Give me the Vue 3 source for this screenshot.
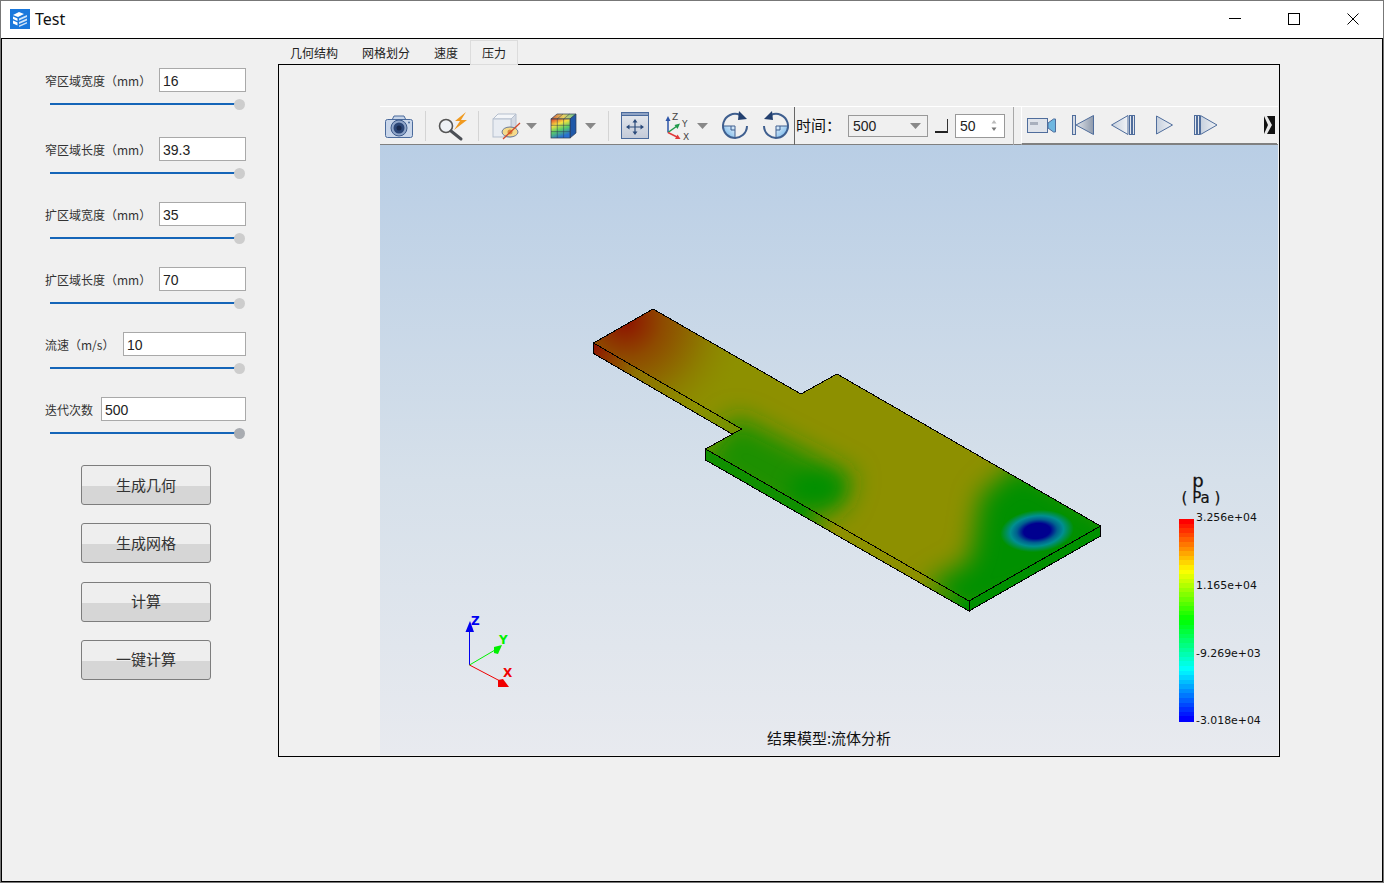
<template>
  <div class="window">
    <header class="titlebar">
      <svg class="logo" viewBox="0 0 20 20">
        <rect width="20" height="20" fill="#1a78dc" />
        <path d="M3 6 L9 3 L14 5 L8 8 Z" fill="#ffffff" />
        <path d="M3 7.5 L7.5 9.5 V12 L3 10 Z" fill="#ffffff" />
        <path d="M3 11.5 L7.5 13.5 V16.5 L3 14.5 Z" fill="#ffffff" />
        <path d="M9 9.5 L17 6 V8 L9 11.5 Z" fill="#cfe4fa" />
        <path d="M9 13 L17 9.5 V11.5 L9 15 Z" fill="#cfe4fa" />
        <path d="M9 16.5 L17 13 V14.5 L9 18 Z" fill="#cfe4fa" />
      </svg>
      <span class="title">Test</span>
      <div class="window-buttons">
        <svg viewBox="0 0 12 12" width="12" height="12"><path d="M0 5.5 H12" stroke="#000" fill="none" /></svg>
        <svg viewBox="0 0 12 12" width="12" height="12"><rect x="0.5" y="0.5" width="11" height="11" stroke="#000" fill="none" /></svg>
        <svg viewBox="0 0 12 12" width="12" height="12"><path d="M0.5 0.5 L11.5 11.5 M11.5 0.5 L0.5 11.5" stroke="#000" fill="none" /></svg>
      </div>
    </header>

    <main class="client">
      <aside class="sidebar">
        <div class="fields">
          <div v-for="field in fields" :key="field.label" class="field">
            <div class="field-row">
              <label class="field-label">{{ field.label }}</label>
              <input class="field-input" :value="field.value" :style="{ width: field.width + 'px' }" readonly />
            </div>
            <div class="slider">
              <div class="slider-thumb" :class="{ active: field.active }"></div>
            </div>
          </div>
        </div>

        <div class="actions">
          <button v-for="action in actions" :key="action" class="action-button">{{ action }}</button>
        </div>
      </aside>

      <section class="tabs-area">
        <nav class="tabs">
          <div v-for="tab in tabs" :key="tab" class="tab" :class="{ current: tab === currentTab }">{{ tab }}</div>
        </nav>

        <div class="pane">
          <div class="viewer">
            <div class="toolbar">
              <div class="tools-left">
                <!-- 相机 -->
                <svg class="icon" viewBox="0 0 30 30">
                  <path d="M8 9 L10 5 H20 L22 9 Z" fill="#c6d4e8" stroke="#4a6a9c" />
                  <rect x="1.5" y="8.5" width="27" height="18" rx="2" fill="#c9d6ea" stroke="#4a6a9c" />
                  <circle cx="15" cy="17" r="8" fill="#8fa5c9" stroke="#3d5a8a" />
                  <circle cx="15" cy="17" r="5.5" fill="#2b4677" />
                  <circle cx="15" cy="17" r="2.5" fill="#17274b" />
                  <circle cx="25" cy="11.5" r="1" fill="#4a6a9c" />
                </svg>
                <div class="sep"></div>
                <!-- 放大镜 -->
                <svg class="icon" viewBox="0 0 30 30">
                  <circle cx="9" cy="15" r="6.5" fill="#eef1f5" stroke="#555" stroke-width="1.6" />
                  <path d="M14 20 L24 28" stroke="#4b4f55" stroke-width="3" stroke-linecap="round" />
                  <path d="M29 1 L18 10 H23 L17 19 L30 9 H24 Z" fill="#f09a20" />
                </svg>
                <div class="sep"></div>
                <div class="tool-group">
                  <svg class="icon" viewBox="0 0 30 30">
                    <path d="M3 8 L8 3 H26 L21 8 Z" fill="#f4f6f9" stroke="#b5bfce" />
                    <path d="M21 8 L26 3 V21 L21 26 Z" fill="#d3d9e3" stroke="#b5bfce" />
                    <rect x="3" y="8" width="18" height="18" fill="#e8ecf2" stroke="#b5bfce" />
                    <ellipse cx="20" cy="21" rx="8" ry="5" fill="#f4d98a" stroke="#6a7a98" />
                    <circle cx="20" cy="21" r="2.5" fill="#d98a3a" />
                    <path d="M13 28 L30 12" stroke="#d2492a" stroke-width="1.3" />
                  </svg>
                  <svg class="drop" viewBox="0 0 11 6"><path d="M0 0 H11 L5.5 6 Z" fill="#888" /></svg>
                </div>
                <div class="tool-group tight">
                  <svg class="icon" viewBox="0 0 30 30">
                    <defs>
                      <linearGradient id="cube-front" x1="0" y1="0" x2="0.4" y2="1">
                        <stop offset="0" stop-color="#e03a2c" />
                        <stop offset="0.35" stop-color="#f7e040" />
                        <stop offset="0.65" stop-color="#58cc68" />
                        <stop offset="1" stop-color="#2a70d0" />
                      </linearGradient>
                      <linearGradient id="cube-top" x1="0" y1="0" x2="1" y2="0">
                        <stop offset="0" stop-color="#d05a38" />
                        <stop offset="0.5" stop-color="#e7d060" />
                        <stop offset="1" stop-color="#5ec49a" />
                      </linearGradient>
                    </defs>
                    <path d="M2 8 L8 3 H27 L21 8 Z" fill="url(#cube-top)" stroke="#2b3a55" stroke-width="0.7" />
                    <path d="M21 8 L27 3 V22 L21 27 Z" fill="#1f58a8" stroke="#2b3a55" stroke-width="0.7" />
                    <rect x="2" y="8" width="19" height="19" fill="url(#cube-front)" stroke="#2b3a55" stroke-width="0.7" />
                    <path d="M8.3 8 V27 M14.6 8 V27 M2 14.3 H21 M2 20.6 H21 M8 8 L14 3 M14.6 8 L20.6 3" stroke="#2b3a55" stroke-width="0.5" fill="none" />
                  </svg>
                  <svg class="drop" viewBox="0 0 11 6"><path d="M0 0 H11 L5.5 6 Z" fill="#888" /></svg>
                </div>
                <div class="sep tight"></div>
                <!-- 适应窗口 -->
                <svg class="icon" viewBox="0 0 30 30">
                  <defs>
                    <linearGradient id="fit-fill" x1="0" y1="0" x2="0" y2="1">
                      <stop offset="0" stop-color="#e6e9ee" />
                      <stop offset="1" stop-color="#c3cad8" />
                    </linearGradient>
                  </defs>
                  <rect x="1.5" y="1.5" width="27" height="26" fill="url(#fit-fill)" stroke="#4a6a9c" />
                  <rect x="1.5" y="1.5" width="27" height="3" fill="#8fa3c4" stroke="#4a6a9c" />
                  <path d="M15 11 V21 M9 16 H21" stroke="#2b4a7a" stroke-width="1.2" />
                  <path d="M15 8 L12.5 11.5 H17.5 Z M15 24 L12.5 20.5 H17.5 Z M6 16 L9.5 13.5 V18.5 Z M24 16 L20.5 13.5 V18.5 Z" fill="#2b4a7a" />
                </svg>
                <div class="tool-group axes-group">
                  <svg class="icon axes-icon" viewBox="0 0 33 30">
                    <path d="M7 21.5 V8" stroke="#2d55a8" stroke-width="1.5" />
                    <path d="M7 5 L4.5 10 H9.5 Z" fill="#2d55a8" />
                    <path d="M7 21.5 L16 15" stroke="#1f9a4a" stroke-width="1.5" />
                    <path d="M19 12.5 L13.5 14 L16.5 18 Z" fill="#1f9a4a" />
                    <path d="M7 21.5 L16 26" stroke="#e03a3a" stroke-width="1.5" />
                    <path d="M19.5 28 L14 28 L16.5 23.5 Z" fill="#e03a3a" />
                    <text class="axis-letter" x="11" y="9">Z</text>
                    <text class="axis-letter" x="21" y="16">Y</text>
                    <text class="axis-letter" x="22" y="29">X</text>
                  </svg>
                  <svg class="drop" viewBox="0 0 11 6"><path d="M0 0 H11 L5.5 6 Z" fill="#888" /></svg>
                </div>
                <!-- 旋转 -->
                <svg
                  v-for="dir in ['cw', 'ccw']"
                  :key="dir"
                  class="icon"
                  :class="dir === 'ccw' ? 'mirror' : 'tight'"
                  viewBox="0 0 30 30"
                >
                  <defs>
                    <linearGradient :id="'rot-' + dir" x1="1" y1="0" x2="0" y2="1">
                      <stop offset="0" stop-color="#e8f2fb" />
                      <stop offset="1" stop-color="#5aa9e6" />
                    </linearGradient>
                  </defs>
                  <path d="M15 15 H3 A12 12 0 0 0 15 27 Z" :fill="'url(#rot-' + dir + ')'" />
                  <path d="M15 15 H3 M15 15 V27 M11 15 V19 H15" stroke="#3f5f8f" fill="none" />
                  <path d="M27 15 A12 12 0 1 1 20 4" stroke="#3f5f8f" stroke-width="2" fill="none" />
                  <path d="M19 0 L27 8 L18 9 Z" fill="#23406f" />
                </svg>
              </div>

              <div class="strong-divider"></div>
              <span class="time-label">时间：</span>
              <div class="combo">
                <span>500</span>
                <svg class="drop" viewBox="0 0 11 6"><path d="M0 0 H11 L5.5 6 Z" fill="#888" /></svg>
              </div>
              <div class="corner"></div>
              <div class="spin">
                <span>50</span>
                <svg class="spin-arrows" viewBox="0 0 6 13">
                  <path d="M3 1 L5.5 4.5 H0.5 Z" fill="#bbb" />
                  <path d="M3 12 L5.5 8.5 H0.5 Z" fill="#777" />
                </svg>
              </div>
              <div class="light-divider"></div>

              <div class="player">
                <svg class="icon" viewBox="0 0 30 30">
                  <rect x="1.5" y="8.5" width="20" height="14" fill="#dfe3ea" stroke="#4f6d9c" />
                  <rect x="4" y="12" width="8" height="3" fill="#a9b0bd" />
                  <path d="M22 13 L27.5 9 H29.5 V22 H27.5 L22 18 Z" fill="#6fb7e0" stroke="#4f6d9c" />
                </svg>
                <svg class="icon" viewBox="0 0 30 30">
                  <rect x="5.5" y="5.5" width="3" height="19" fill="#d4dae4" stroke="#4f6d9c" />
                  <path d="M9 15 L26.5 5.5 V24.5 Z" fill="url(#step-back)" stroke="#4f6d9c" />
                  <defs>
                    <linearGradient id="step-back" x1="0" y1="0" x2="1" y2="0">
                      <stop offset="0" stop-color="#e2e6ec" />
                      <stop offset="1" stop-color="#8d99ab" />
                    </linearGradient>
                    <linearGradient id="step-plain" x1="0" y1="0" x2="1" y2="0">
                      <stop offset="0" stop-color="#c6d0de" />
                      <stop offset="1" stop-color="#f1f3f6" />
                    </linearGradient>
                  </defs>
                </svg>
                <svg class="icon" viewBox="0 0 30 30">
                  <path d="M3.5 15 L20 5.5 V24.5 Z" fill="url(#step-plain)" stroke="#4f6d9c" />
                  <rect x="21.5" y="5.5" width="2" height="19" fill="#e3e7ee" stroke="#4f6d9c" />
                  <rect x="24.5" y="5.5" width="2" height="19" fill="#e3e7ee" stroke="#4f6d9c" />
                </svg>
                <svg class="icon" viewBox="0 0 30 30">
                  <path d="M7.5 6 L23.5 15 L7.5 24 Z" fill="url(#step-plain)" stroke="#4f6d9c" />
                </svg>
                <svg class="icon" viewBox="0 0 30 30">
                  <rect x="4.5" y="5.5" width="2" height="19" fill="#e3e7ee" stroke="#4f6d9c" />
                  <rect x="7.5" y="5.5" width="2" height="19" fill="#e3e7ee" stroke="#4f6d9c" />
                  <path d="M10.5 5.5 L27 15 L10.5 24.5 Z" fill="url(#step-plain)" stroke="#4f6d9c" />
                </svg>
                <svg class="more" viewBox="0 0 11 18">
                  <rect width="11" height="18" fill="#111" />
                  <path d="M0 0 L3 0 L8 9 L3 18 L0 18 L4 9 Z" fill="#e8e8e8" />
                </svg>
              </div>
            </div>

            <div class="scene">
              <svg class="scene-svg" viewBox="380 145 898 610">
                <defs>
                  <clipPath id="top-face">
                    <polygon :points="topFace" />
                  </clipPath>
                  <radialGradient id="hot" gradientUnits="userSpaceOnUse" cx="625" cy="320" r="125">
                    <stop offset="0" stop-color="#8e1000" />
                    <stop offset="0.3" stop-color="#8e4a00" />
                    <stop offset="0.65" stop-color="#8d7a00" />
                    <stop offset="1" stop-color="#8d9000" stop-opacity="0" />
                  </radialGradient>
                  <radialGradient id="cold">
                    <stop offset="0" stop-color="#00008f" />
                    <stop offset="0.36" stop-color="#00008f" />
                    <stop offset="0.55" stop-color="#00608f" />
                    <stop offset="0.72" stop-color="#008f90" />
                    <stop offset="1" stop-color="#009000" />
                  </radialGradient>
                  <linearGradient id="side-narrow" gradientUnits="userSpaceOnUse" x1="593" y1="343" x2="741" y2="430">
                    <stop offset="0" stop-color="#8e1000" />
                    <stop offset="0.3" stop-color="#8e7000" />
                    <stop offset="0.7" stop-color="#8d9000" />
                    <stop offset="1" stop-color="#6f9200" />
                  </linearGradient>
                  <linearGradient id="side-wide" gradientUnits="userSpaceOnUse" x1="705" y1="449" x2="969" y2="601">
                    <stop offset="0" stop-color="#109000" />
                    <stop offset="0.38" stop-color="#109000" />
                    <stop offset="0.5" stop-color="#8d9000" />
                    <stop offset="0.82" stop-color="#8d9000" />
                    <stop offset="1" stop-color="#009000" />
                  </linearGradient>
                  <filter id="blur-big" x="-40%" y="-40%" width="180%" height="180%">
                    <feGaussianBlur stdDeviation="13" />
                  </filter>
                  <filter id="blur-small" x="-50%" y="-50%" width="200%" height="200%">
                    <feGaussianBlur stdDeviation="9" />
                  </filter>
                </defs>

                <!-- 模型侧面 -->
                <polygon points="593.5,343 741.5,429 732,434 593.5,353.5" fill="url(#side-narrow)" />
                <polygon points="705.5,449 969,601 969,611 705.5,460" fill="url(#side-wide)" />
                <polygon points="969,601 1100.5,526 1100.5,536 969,611" fill="#009000" />

                <!-- 模型顶面与压力云图 -->
                <g clip-path="url(#top-face)">
                  <polygon :points="topFace" fill="#8d9000" />
                  <circle cx="625" cy="320" r="125" fill="url(#hot)" />
                  <polygon points="735,415 800,448 855,476 842,508 800,525 695,465" fill="#1a9000" filter="url(#blur-big)" />
                  <ellipse cx="815" cy="488" rx="26" ry="15" fill="#009000" filter="url(#blur-small)" />
                  <polygon points="1120,520 1020,462 980,495 970,560 925,585 965,620 1120,560" fill="#009000" filter="url(#blur-big)" />
                  <ellipse cx="1037" cy="531" rx="37" ry="21" fill="url(#cold)" transform="rotate(-6 1037 531)" />
                </g>

                <g class="outline">
                  <polygon :points="topFace" />
                  <path d="M593.5 343 V353.5 L732 434 M705.5 449 V460 L969 611 V601 M969 611 L1100.5 536 V526" />
                </g>

                <!-- 坐标轴 -->
                <path d="M469.5 665 V630" stroke="#0000f0" fill="none" />
                <path d="M465.5 632 H474 L470 621 Z" fill="#0000f0" />
                <path d="M469.5 665 L495 650" stroke="#00f000" fill="none" />
                <path d="M494 647 L502 645 L498 654 L494 653 Z" fill="#00f000" />
                <path d="M469.5 665 L500 681" stroke="#f00000" fill="none" />
                <path d="M498 687 L509 687 L503 679 L498 680 Z" fill="#f00000" />
                <text class="axis-name" x="471" y="625" fill="#0000f0">Z</text>
                <text class="axis-name" x="499" y="644" fill="#00f000">Y</text>
                <text class="axis-name" x="503" y="677" fill="#f00000">X</text>

                <!-- 色标 -->
                <rect
                  v-for="band in colorBands"
                  :key="band.y"
                  x="1179"
                  :y="band.y"
                  width="15"
                  :height="band.height"
                  :fill="band.color"
                  shape-rendering="crispEdges"
                />
                <text class="legend-name" x="1198" y="487" text-anchor="middle">p</text>
                <text class="legend-unit" x="1201" y="503" text-anchor="middle">( Pa )</text>
                <text v-for="tick in ticks" :key="tick.text" class="legend-tick" x="1196" :y="tick.y">{{ tick.text }}</text>

                <text class="caption" x="829" y="744" text-anchor="middle">结果模型:流体分析</text>
              </svg>
            </div>
          </div>
        </div>
      </section>
    </main>
  </div>
</template>

<script setup>
// 左侧参数
const fields = [
  { label: '窄区域宽度（mm）', value: '16', width: 87 },
  { label: '窄区域长度（mm）', value: '39.3', width: 87 },
  { label: '扩区域宽度（mm）', value: '35', width: 87 },
  { label: '扩区域长度（mm）', value: '70', width: 87 },
  { label: '流速（m/s）', value: '10', width: 123 },
  { label: '迭代次数', value: '500', width: 145, active: true },
]

const actions = ['生成几何', '生成网格', '计算', '一键计算']
const tabs = ['几何结构', '网格划分', '速度', '压力']
const currentTab = '压力'

const topFace =
  '593.5,343 653,309 801,394 837,374 1100.5,526 969,601 705.5,449 741.5,429'

const ticks = [
  { text: '3.256e+04', y: 521 },
  { text: '1.165e+04', y: 589 },
  { text: '-9.269e+03', y: 657 },
  { text: '-3.018e+04', y: 724 },
]

// 色标分段：红-黄-绿-青-蓝
const stops = [
  [255, 0, 0],
  [255, 255, 0],
  [0, 255, 0],
  [0, 255, 255],
  [0, 0, 255],
]
const bandCount = 44
const bandHeight = 202 / bandCount
const colorBands = Array.from({ length: bandCount }, (_, i) => {
  const t = (i / (bandCount - 1)) * (stops.length - 1)
  const index = Math.min(Math.floor(t), stops.length - 2)
  const f = t - index
  const rgb = stops[index].map((c, k) => Math.round(c + (stops[index + 1][k] - c) * f))
  return {
    y: 519 + i * bandHeight,
    height: bandHeight + 0.5,
    color: `rgb(${rgb.join(',')})`,
  }
})
</script>

<style>
html,
body {
  margin: 0;
  overflow: hidden;
}
</style>

<style scoped>
.window {
  width: 1384px;
  height: 883px;
  box-sizing: border-box;
  border: 1px solid #777777;
  background: #ffffff;
  font-family: "Noto Sans CJK SC", "Noto Sans", sans-serif;
  color: #222222;
}

.titlebar {
  height: 37px;
  box-sizing: border-box;
  padding: 0 0 1px 9px;
  display: flex;
  align-items: center;
}

.logo {
  width: 20px;
  height: 20px;
}

.title {
  margin-left: 5px;
  font-family: "Noto Sans", sans-serif;
  font-size: 16px;
  color: #111111;
}

.window-buttons {
  margin-left: auto;
  margin-right: 24px;
  display: flex;
  gap: 47px;
}

.client {
  height: 844px;
  box-sizing: border-box;
  border: 1px solid #000000;
  background: #f0f0f0;
  display: flex;
  align-items: flex-start;
}

.sidebar {
  width: 276px;
  box-sizing: border-box;
  padding: 29px 32px 0 43px;
}

.fields {
  display: flex;
  flex-direction: column;
  gap: 28px;
}

.field:first-child {
  margin-bottom: 4px;
}

.field-row {
  height: 24px;
  display: flex;
  align-items: center;
  justify-content: space-between;
}

.field-label {
  font-size: 12px;
  color: #333333;
  white-space: nowrap;
}

.field-input {
  height: 24px;
  box-sizing: border-box;
  padding: 2px 3px 0;
  border: 1px solid #a9a9a9;
  background: #ffffff;
  outline: none;
  font-family: "Liberation Sans", sans-serif;
  font-size: 14px;
  color: #222222;
}

.slider {
  position: relative;
  width: 190px;
  height: 2px;
  margin: 11px 0 0 5px;
  background: #1565b8;
}

.slider-thumb {
  position: absolute;
  right: -5px;
  top: -4.5px;
  width: 11px;
  height: 11px;
  border-radius: 50%;
  background: #cdcdcd;
}

.slider-thumb.active {
  background: #a9acb1;
}

.actions {
  display: flex;
  flex-direction: column;
  gap: 18.33px;
  margin: 31px 0 0 36px;
}

.action-button {
  width: 130px;
  height: 40px;
  padding: 0 0 2px;
  border: 1px solid #7d7d7d;
  border-radius: 3px;
  background: linear-gradient(180deg, #eeeeee 0, #eeeeee 52%, #d6d6d6 52%, #d6d6d6 100%);
  font-family: "Noto Sans CJK SC", sans-serif;
  font-size: 15px;
  color: #333333;
}

.tabs-area {
  margin-top: 1px;
  width: 1002px;
}

.tabs {
  height: 24px;
  display: flex;
}

.tab {
  padding: 0 12px;
  font-size: 12px;
  line-height: 25px;
  color: #222222;
}

.tab.current {
  position: relative;
  z-index: 1;
  height: 25px;
  box-sizing: border-box;
  padding: 0 11px;
  border: 1px solid #dcdcdc;
  line-height: 23px;
  background: #f0f0f0;
}

.pane {
  height: 693px;
  box-sizing: border-box;
  border: 1px solid #000000;
  padding: 41px 1px 1px 101px;
}

.viewer {
  height: 100%;
  display: flex;
  flex-direction: column;
}

.toolbar {
  height: 39px;
  flex-shrink: 0;
  box-sizing: border-box;
  border-top: 1px solid #ffffff;
  border-bottom: 1px solid #808080;
  background: #f0f0f0;
  display: flex;
  align-items: center;
}

.tools-left {
  display: flex;
  align-items: center;
  gap: 11px;
  padding-left: 4px;
}

.icon {
  width: 30px;
  height: 30px;
  flex-shrink: 0;
  overflow: visible;
}

.mirror {
  transform: scaleX(-1);
}

.sep {
  width: 1px;
  height: 30px;
  background: #d4d4d4;
}

.tool-group {
  display: flex;
  align-items: center;
  gap: 6px;
}

.tight {
  margin-left: 1px;
}

.axes-group {
  gap: 3px;
}

.axes-icon {
  width: 33px;
}

.axis-letter {
  font-family: "DejaVu Sans", sans-serif;
  font-size: 9px;
  fill: #444444;
}

.drop {
  width: 11px;
  height: 6px;
  flex-shrink: 0;
}

.strong-divider {
  width: 1px;
  height: 38px;
  margin-left: 3px;
  background: #666666;
}

.time-label {
  width: 52px;
  margin-left: 1px;
  padding-bottom: 2px;
  font-size: 15px;
  color: #111111;
  white-space: nowrap;
}

.combo {
  width: 80px;
  height: 22px;
  box-sizing: border-box;
  padding: 0 6px 0 4px;
  border: 1px solid #999999;
  display: flex;
  align-items: center;
  justify-content: space-between;
  font-family: "Liberation Sans", sans-serif;
  font-size: 14px;
}

.corner {
  width: 12px;
  height: 12px;
  margin-left: 7px;
  border-right: 1px solid #333333;
  border-bottom: 2px solid #222222;
}

.spin {
  width: 50px;
  height: 24px;
  box-sizing: border-box;
  margin-left: 7px;
  padding: 0 7px 0 4px;
  border: 1px solid #999999;
  background: #ffffff;
  display: flex;
  align-items: center;
  justify-content: space-between;
  font-family: "Liberation Sans", sans-serif;
  font-size: 14px;
}

.spin-arrows {
  width: 6px;
  height: 13px;
}

.light-divider {
  width: 1px;
  height: 38px;
  margin-left: 8px;
  background: #a8a8a8;
}

.player {
  flex: 1;
  align-self: stretch;
  min-width: 0;
  margin: -1px 1px -1px 7px;
  padding-left: 4px;
  border-top: 1px solid #ffffff;
  border-left: 1px solid #ffffff;
  border-bottom: 2px solid #808080;
  display: flex;
  align-items: center;
  gap: 11px;
}

.more {
  width: 11px;
  height: 18px;
  margin-left: auto;
  margin-right: 2px;
}

.scene {
  flex: 1;
  min-height: 0;
  background: linear-gradient(180deg, #b9cee5 0%, #d6e0ea 55%, #e8eaef 100%);
}

.scene-svg {
  display: block;
  width: 100%;
  height: 100%;
}

.outline polygon,
.outline path {
  fill: none;
  stroke: #000000;
  stroke-width: 1;
  shape-rendering: crispEdges;
}

.axis-name {
  font-family: "DejaVu Sans", sans-serif;
  font-size: 12px;
  font-weight: 700;
}

.legend-name {
  font-family: "DejaVu Sans", sans-serif;
  font-size: 18px;
  fill: #111111;
  stroke: #111111;
  stroke-width: 0.3;
}

.legend-unit {
  font-family: "DejaVu Sans", sans-serif;
  font-size: 15px;
  fill: #111111;
  stroke: #111111;
  stroke-width: 0.2;
}

.legend-tick {
  font-family: "DejaVu Sans", sans-serif;
  font-size: 10.9px;
  fill: #111111;
}

.caption {
  font-family: "Noto Sans CJK SC", sans-serif;
  font-size: 15px;
  fill: #111111;
}
</style>
